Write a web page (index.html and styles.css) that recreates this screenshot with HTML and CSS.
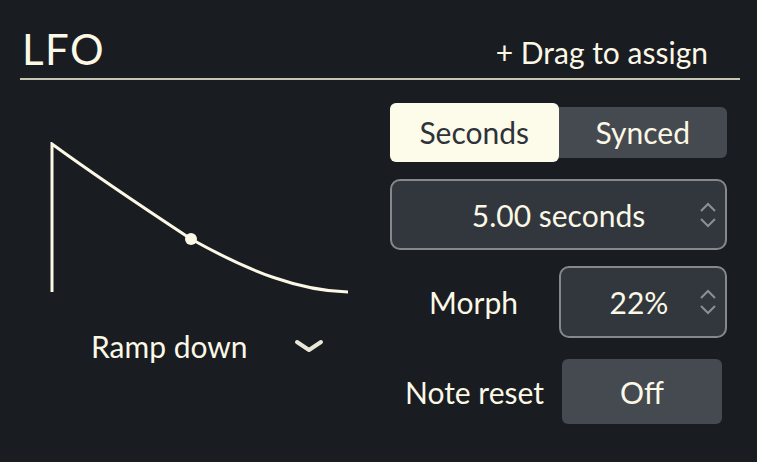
FILE: index.html
```html
<!DOCTYPE html>
<html lang="en">
<head>
  <meta charset="UTF-8" />
  <title>LFO</title>
  <link rel="stylesheet" href="styles.css">
</head>
<body>
  <div class="panel">
    <div class="header">
      <h1>LFO</h1>
      <span class="assign">+ Drag to assign</span>
    </div>

    <div class="main">
      <div class="shape">
        <svg class="wave" width="320" height="160" viewBox="0 0 320 160">
          <path d="M12 150 L12 2 C60 37 110 70 151 97 C210 130 260 149 308 150" fill="none" stroke="#fbf8e6" stroke-width="3"/>
          <circle cx="151" cy="97" r="6" fill="#fbf8e6"/>
        </svg>
        <div class="shape-select">
          <span>Ramp down</span>
          <svg width="30" height="16" viewBox="0 0 30 16">
            <path d="M3 4 L15 12 L27 4" fill="none" stroke="#e9e7d8" stroke-width="4" stroke-linecap="round" stroke-linejoin="round"/>
          </svg>
        </div>
      </div>

      <div class="controls">
        <div class="segment">
          <div class="seg active">Seconds</div>
          <div class="seg">Synced</div>
        </div>

        <div class="stepper wide">
          <span class="value">5.00 seconds</span>
          <svg class="arrows" width="18" height="30" viewBox="0 0 18 30">
            <path d="M2 11 L9 4 L16 11 M2 19 L9 26 L16 19" fill="none" stroke="#8c9095" stroke-width="2"/>
          </svg>
        </div>

        <div class="row">
          <span class="label">Morph</span>
          <div class="stepper small">
            <span class="value">22%</span>
            <svg class="arrows" width="18" height="30" viewBox="0 0 18 30">
              <path d="M2 11 L9 4 L16 11 M2 19 L9 26 L16 19" fill="none" stroke="#8c9095" stroke-width="2"/>
            </svg>
          </div>
        </div>

        <div class="row">
          <span class="label">Note reset</span>
          <div class="toggle">Off</div>
        </div>
      </div>
    </div>
  </div>
</body>
</html>
```

FILE: styles.css
```css
* {
  box-sizing: border-box;
}

body {
  margin: 0;
  background: #191c21;
  color: #fbf8e6;
  font-family: Lato, "Noto Sans", sans-serif;
}

.panel {
  padding: 24px 17px 0 20px;
}

.header {
  display: flex;
  justify-content: space-between;
  align-items: flex-end;
  border-bottom: 2px solid #c8c7b6;
  padding: 0 32px 8px 2px;
  height: 56px;
}

h1 {
  margin: 0;
  font-size: 42px;
  font-weight: 400;
  letter-spacing: 1.5px;
  line-height: 1;
}

.assign {
  font-size: 30px;
  line-height: 1;
  padding-bottom: 3px;
}

.main {
  display: flex;
  margin-top: 22px;
}

.shape {
  width: 370px;
  display: flex;
  flex-direction: column;
  padding-top: 40px;
}

.wave {
  display: block;
  margin-left: 20px;
}

.shape-select {
  display: flex;
  align-items: center;
  margin-top: 26px;
  margin-left: 71px;
  gap: 46px;
  font-size: 30px;
}

.controls {
  width: 337px;
  display: flex;
  flex-direction: column;
}

.segment {
  display: flex;
  align-items: center;
  height: 60px;
}

.seg {
  flex: 1;
  height: 51px;
  display: flex;
  align-items: center;
  justify-content: center;
  background: #454a50;
  font-size: 30px;
  border-radius: 0 6px 6px 0;
}

.seg.active {
  height: 59px;
  background: #fdfbe9;
  color: #2e333a;
  border-radius: 6px;
}

.stepper {
  position: relative;
  display: flex;
  align-items: center;
  justify-content: center;
  background: #32373e;
  border: 2px solid #85898e;
  border-radius: 10px;
  font-size: 30px;
}

.stepper.wide {
  height: 71px;
  margin-top: 17px;
}

.stepper.small {
  width: 168px;
  height: 72px;
}

.stepper .arrows {
  position: absolute;
  right: 8px;
  top: 50%;
  margin-top: -15px;
}

.stepper.small .value {
  margin-right: 8px;
}

.row {
  display: flex;
  align-items: center;
  justify-content: flex-end;
  margin-top: 16px;
  gap: 41px;
}

.label {
  font-size: 30px;
}

.row + .row {
  margin-top: 21px;
  gap: 18px;
}

.toggle {
  width: 160px;
  height: 65px;
  margin-right: 5px;
  display: flex;
  align-items: center;
  justify-content: center;
  background: #454a50;
  border-radius: 6px;
  font-size: 30px;
}
```
